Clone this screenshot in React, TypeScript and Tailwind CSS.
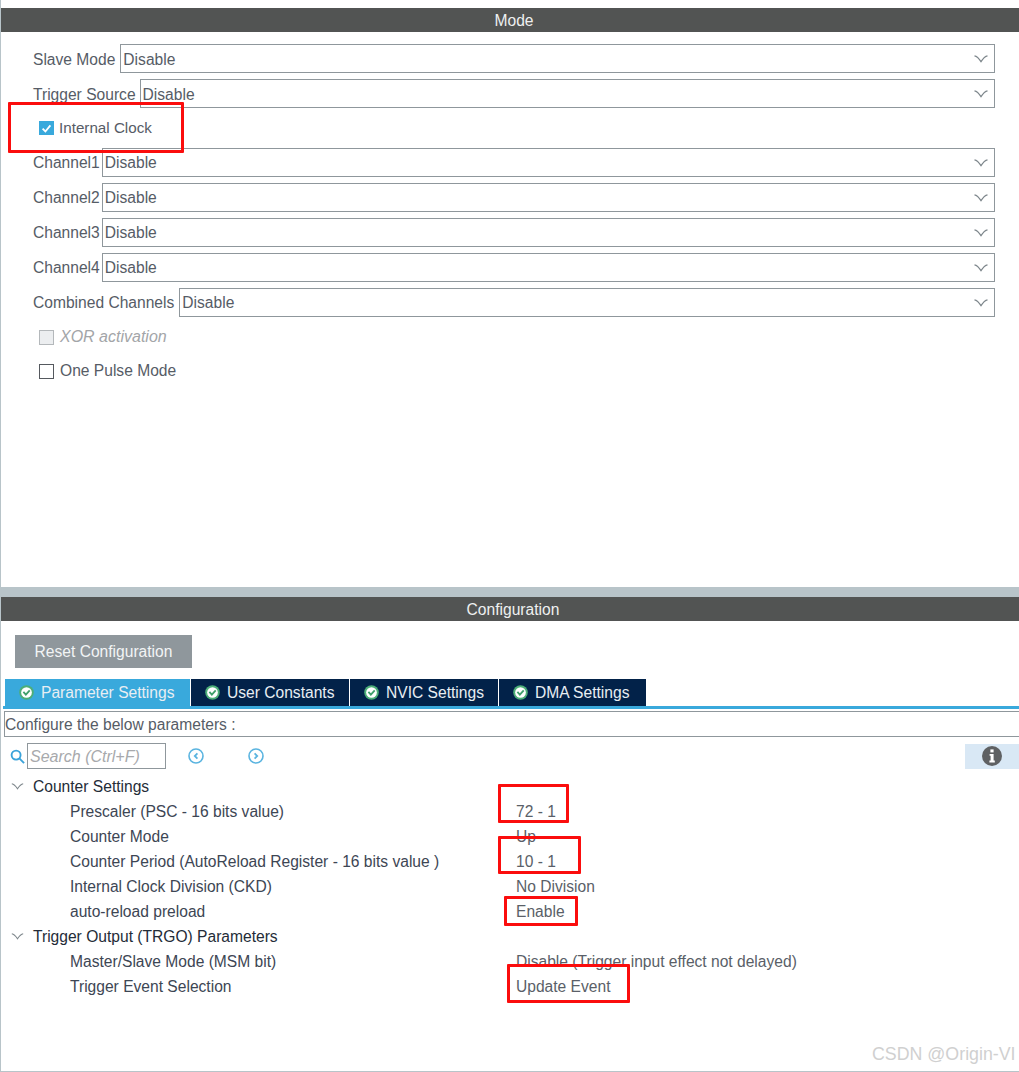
import React from "react"

const FONT = "font-['Liberation_Sans',Arial,sans-serif]"

function Chevron({ className }: { className?: string }) {
  return (
    <svg viewBox="0 0 14 8" className={className} fill="none" stroke="currentColor" strokeWidth="1.3">
      <path d="M0.5 0.8 C3 1.2 5 3.5 7 6.6 C9 3.5 11 1.2 13.5 0.8" />
    </svg>
  )
}

function SelectRow({ label, gap = "gap-[2px]", low }: { label: string; gap?: string; low?: boolean }) {
  return (
    <div className={`flex h-[29px] items-center ${gap}`}>
      <span className={`shrink-0 text-[#565c66] ${low ? "pt-[2px]" : ""}`}>{label}</span>
      <div className="flex h-full flex-1 items-center justify-between border border-[#8f979c] pl-[2px] pr-[5px] text-[#565c66]">
        <span className={low ? "pt-[2px]" : ""}>Disable</span>
        <Chevron className="mr-[1px] h-[8px] w-[14px] text-[#7d868b]" />
      </div>
    </div>
  )
}

function CheckIcon() {
  return (
    <svg viewBox="0 0 14 14" className="h-[15px] w-[15px] shrink-0">
      <circle cx="7" cy="7" r="6.8" fill="#4dae78" />
      <circle cx="7" cy="7" r="5" fill="#ffffff" />
      <path d="M4.1 6.4 L6.4 8.9 L10 5" fill="none" stroke="#3f9f6b" strokeWidth="1.7" />
    </svg>
  )
}

function Tab({ label, active, width }: { label: string; active?: boolean; width: string }) {
  return (
    <div
      className={`flex h-full items-center gap-[7px] border-r border-white pl-[14px] ${width} ${
        active ? "bg-[#39a9dc]" : "bg-[#022249]"
      } text-[#e8eef3]`}
    >
      <CheckIcon />
      <span>{label}</span>
    </div>
  )
}

function CircleArrow({ left }: { left?: boolean }) {
  return (
    <svg viewBox="0 0 16 16" className="h-[16px] w-[16px]" fill="none" stroke="#5ab4e0" strokeWidth="1.6">
      <circle cx="8" cy="8" r="7" />
      <path d={left ? "M9.4 5.4 L6.8 8 L9.4 10.6" : "M6.6 5.4 L9.2 8 L6.6 10.6"} strokeWidth="1.8" />
    </svg>
  )
}

function GroupRow({ label }: { label: string }) {
  return (
    <div className="flex h-[25px] items-center text-[#242c38]">
      <Chevron className="ml-[10px] mr-[9px] h-[7px] w-[13px] text-[#7d868b]" />
      <span>{label}</span>
    </div>
  )
}

function ParamRow({ label, value }: { label: string; value: string }) {
  return (
    <div className="flex h-[25px] items-center">
      <span className="w-[515px] shrink-0 pl-[69px] text-[#3d4654]">{label}</span>
      <span className="text-[#5a5f68]">{value}</span>
    </div>
  )
}

function RedBox({ className }: { className: string }) {
  return <div className={`pointer-events-none absolute rounded-[1px] border-[3px] border-[#fb0d0d] ${className}`} />
}

export default function App() {
  return (
    <div className={`relative h-[1072px] w-[1019px] overflow-hidden bg-white text-[15.6px] leading-[20px] ${FONT}`}>
      <div className="flex h-full flex-col border-l border-[#b8c4c9]">
        {/* Mode panel */}
        <div className="h-[8px]" />
        <div className="flex h-[24px] items-center justify-center bg-[#525453] pl-[8px] pt-[1px] text-[#eef0f0]">Mode</div>
        <div className="flex h-[555px] flex-col pl-[32px] pr-[24px] pt-[12px]">
          <div className="flex flex-col gap-[6px]">
            <SelectRow label="Slave Mode" gap="gap-[5px]" low />
            <SelectRow label="Trigger Source" gap="gap-[4px]" low />
          </div>
          <div className="flex h-[40px] items-center gap-[5px] pl-[6px]">
            <div className="flex h-[14px] w-[15px] items-center justify-center bg-[#39a9dc]">
              <svg viewBox="0 0 14 14" className="h-[13px] w-[13px]" fill="none" stroke="#ffffff" strokeWidth="2">
                <path d="M2.8 7.2 L5.8 10.2 L11.2 3.6" />
              </svg>
            </div>
            <span className="text-[15.2px] text-[#565c66]">Internal Clock</span>
          </div>
          <div className="flex flex-col gap-[6px]">
            <SelectRow label="Channel1" />
            <SelectRow label="Channel2" />
            <SelectRow label="Channel3" />
            <SelectRow label="Channel4" />
            <SelectRow label="Combined Channels" gap="gap-[5px]" />
          </div>
          <div className="mt-[9px] flex h-[22px] items-center gap-[6px] pl-[6px]">
            <div className="h-[15px] w-[15px] border border-[#b4b8bb] bg-[#eceef0]" />
            <span className="text-[16px] italic text-[#a3a5a8]">XOR activation</span>
          </div>
          <div className="mt-[12px] flex h-[22px] items-center gap-[6px] pl-[6px]">
            <div className="h-[15px] w-[15px] border border-[#55595e] bg-white" />
            <span className="text-[#565c66]">One Pulse Mode</span>
          </div>
        </div>

        {/* Splitter */}
        <div className="h-[10px] bg-[#b8c4c9]" />

        {/* Configuration panel */}
        <div className="flex h-[24px] items-center justify-center bg-[#525453] pl-[6px] pt-[1px] text-[#eef0f0]">Configuration</div>
        <div className="flex min-h-0 flex-1 flex-col border-b border-[#b8c4c9]">
          <div className="ml-[14px] mt-[14px] flex h-[33px] w-[177px] items-center justify-center bg-[#8f979c] text-[#f2f4f5]">
            Reset Configuration
          </div>
          <div className="ml-[4px] mt-[11px] flex h-[27px]">
            <Tab label="Parameter Settings" active width="w-[186px]" />
            <Tab label="User Constants" width="w-[159px]" />
            <Tab label="NVIC Settings" width="w-[149px]" />
            <Tab label="DMA Settings" width="w-[148px]" />
          </div>
          <div className="ml-[2px] h-[3px] bg-[#39a9dc]" />
          <div className="ml-[3px] mt-[2px] flex h-[26px] items-center border border-r-0 border-[#8f979c] pt-[1px] text-[#565c66]">
            Configure the below parameters :
          </div>
          <div className="mt-[6px] flex h-[26px] items-center">
            <svg viewBox="0 0 16 16" className="ml-[9px] h-[15px] w-[15px]" fill="none" stroke="#3aa3da" strokeWidth="2">
              <circle cx="6.5" cy="6.5" r="4.8" />
              <path d="M10 10 L15 15" />
            </svg>
            <div className="ml-[2px] flex h-[26px] w-[139px] items-center border border-[#8f979c] pl-[2px] pt-[1px] text-[16px] italic text-[#a7a9ac]">
              Search (Ctrl+F)
            </div>
            <div className="ml-[22px]">
              <CircleArrow left />
            </div>
            <div className="ml-[44px]">
              <CircleArrow />
            </div>
            <div className="ml-auto flex h-[25px] w-[54px] items-center justify-center bg-[#d9e8f5]">
              <svg viewBox="0 0 20 20" className="h-[20px] w-[20px]">
                <circle cx="10" cy="10" r="10" fill="#5f6163" />
                <rect x="8.4" y="3.4" width="3.2" height="3" fill="#ffffff" />
                <path d="M7.6 8 H11.6 V14.6 H12.8 V16.4 H7.4 V14.6 H8.6 V9.8 H7.6 Z" fill="#ffffff" />
              </svg>
            </div>
          </div>
          <div className="mt-[5px] flex flex-col">
            <GroupRow label="Counter Settings" />
            <ParamRow label="Prescaler (PSC - 16 bits value)" value="72 - 1" />
            <ParamRow label="Counter Mode" value="Up" />
            <ParamRow label="Counter Period (AutoReload Register - 16 bits value )" value="10 - 1" />
            <ParamRow label="Internal Clock Division (CKD)" value="No Division" />
            <ParamRow label="auto-reload preload" value="Enable" />
            <GroupRow label="Trigger Output (TRGO) Parameters" />
            <ParamRow label="Master/Slave Mode (MSM bit)" value="Disable (Trigger input effect not delayed)" />
            <ParamRow label="Trigger Event Selection" value="Update Event" />
          </div>
        </div>
      </div>

      {/* Annotations drawn over the screenshot */}
      <RedBox className="left-[8px] top-[102px] h-[51px] w-[176px]" />
      <RedBox className="left-[498px] top-[784px] h-[39px] w-[71px]" />
      <RedBox className="left-[498px] top-[836px] h-[38px] w-[83px]" />
      <RedBox className="left-[504px] top-[896px] h-[30px] w-[74px]" />
      <RedBox className="left-[507px] top-[964px] h-[39px] w-[123px]" />
      <div className="absolute left-[872px] top-[1043px] whitespace-nowrap text-[17.8px] leading-[22px] text-[#d0d0d0]">CSDN @Origin-VI</div>
    </div>
  )
}
